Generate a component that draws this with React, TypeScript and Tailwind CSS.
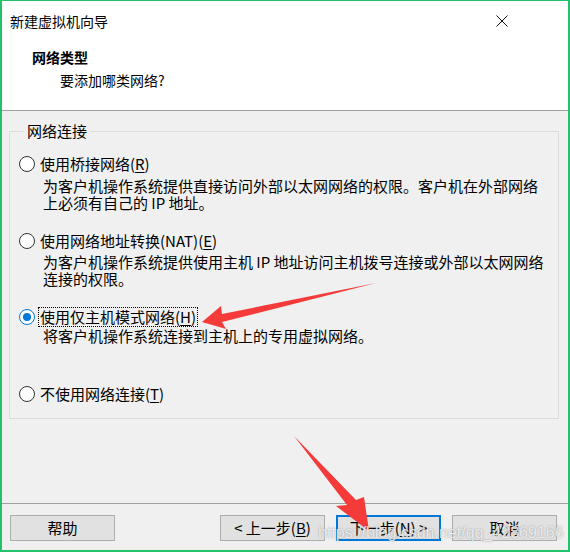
import type { ReactNode } from "react";

const FONT = '"Noto Sans CJK SC", "Noto Sans", sans-serif';

function Radio({ checked }: { checked?: boolean }) {
  return (
    <span
      className={`flex h-[16px] w-[16px] shrink-0 items-center justify-center rounded-full border-[1.5px] bg-white ${
        checked ? "border-[#0078d7]" : "border-[#333333]"
      }`}>
      {checked && <span className="h-[8px] w-[8px] rounded-full bg-[#0078d7]" />}
    </span>
  );
}

function Option({
  label,
  checked,
  focused,
}: {
  label: ReactNode;
  checked?: boolean;
  focused?: boolean;
}) {
  return (
    <div className="flex h-[20px] items-center">
      <Radio checked={checked} />
      <span
        className={`ml-[3px] border px-[1px] leading-[18px] ${
          focused ? "border-dotted border-black" : "border-transparent"
        }`}>
        {label}
      </span>
    </div>
  );
}

function Desc({ lines, className = "" }: { lines: string[]; className?: string }) {
  return (
    <div className={`pl-[24px] leading-[17px] whitespace-nowrap ${className}`}>
      {lines.map((l) => (
        <div key={l}>{l}</div>
      ))}
    </div>
  );
}

function Key({ k }: { k: string }) {
  return <span className="underline underline-offset-2">{k}</span>;
}

function Button({ children, primary }: { children: ReactNode; primary?: boolean }) {
  return (
    <div
      className={`flex h-[26px] w-[105px] items-center justify-center bg-[#e1e1e1] text-[15px] ${
        primary ? "border-2 border-[#0078d7]" : "border border-[#adadad]"
      }`}>
      {children}
    </div>
  );
}

export default function App() {
  return (
    <div
      className="relative flex h-[552px] w-[570px] flex-col overflow-hidden border-x-2 border-t border-b-2 border-[#22c16b] bg-[#f0f0f0] text-black"
      style={{ fontFamily: FONT }}>
      {/* header */}
      <div className="h-[110px] border-b border-[#a0a0a0] bg-white">
        <div className="flex h-[39px] items-center justify-between pl-[8px] pr-[60px]">
          <span className="text-[14px] leading-[20px]">新建虚拟机向导</span>
          <svg width="12" height="12" viewBox="0 0 12 12">
            <path d="M0.5 0.5 L11.5 11.5 M11.5 0.5 L0.5 11.5" stroke="#111" strokeWidth="1" />
          </svg>
        </div>
        <div className="mt-[7px] pl-[30px] text-[14px] leading-[20px] font-bold">网络类型</div>
        <div className="mt-[3px] pl-[58px] text-[14px] leading-[20px]">要添加哪类网络?</div>
      </div>

      {/* body */}
      <div className="flex flex-1 flex-col text-[15px]">
        <fieldset className="mt-[10px] ml-[7px] w-[550px] border border-[#dcdcdc] pt-[13px] pb-[14px] pl-[9px]">
          <legend className="ml-[5px] px-[3px] leading-[20px]">网络连接</legend>
          <Option label={<>使用桥接网络(<Key k="R" />)</>} />
          <Desc
            className="mt-[3px]"
            lines={[
              "为客户机操作系统提供直接访问外部以太网网络的权限。客户机在外部网络",
              "上必须有自己的 IP 地址。",
            ]}
          />
          <div className="mt-[20px]">
            <Option label={<>使用网络地址转换(NAT)(<Key k="E" />)</>} />
          </div>
          <Desc
            className="mt-[2px]"
            lines={[
              "为客户机操作系统提供使用主机 IP 地址访问主机拨号连接或外部以太网网络",
              "连接的权限。",
            ]}
          />
          <div className="mt-[20px]">
            <Option checked focused label={<>使用仅主机模式网络(<Key k="H" />)</>} />
          </div>
          <Desc lines={["将客户机操作系统连接到主机上的专用虚拟网络。"]} />
          <div className="mt-[40px]">
            <Option label={<>不使用网络连接(<Key k="T" />)</>} />
          </div>
        </fieldset>

        <div className="mt-auto border-t border-[#a0a0a0] pt-[11px] pb-[9px]">
          <div className="flex items-center pr-[11px] pl-[8px]">
            <Button>帮助</Button>
            <div className="ml-auto flex gap-[11px]">
              <Button>
                &lt; 上一步(<Key k="B" />)
              </Button>
              <Button primary>
                下一步(<Key k="N" />) &gt;
              </Button>
              <Button>取消</Button>
            </div>
          </div>
        </div>
      </div>

      {/* annotation arrows */}
      <svg
        className="pointer-events-none absolute top-[-1px] left-[-2px]"
        width="570"
        height="552"
        viewBox="0 0 570 552">
        <polygon
          points="376,283 222,314 221,306 202,322 226,329 222,322"
          fill="#f53a3a"
        />
        <polygon
          points="294,436 356,500 364,497 369,531 336,506 347,505"
          fill="#f53a3a"
        />
      </svg>

      <span
        className="pointer-events-none absolute top-[522px] left-[316px] text-[16px] leading-[20px] whitespace-nowrap text-white/80 [text-shadow:0_0_1.5px_rgba(90,90,90,0.7)]"
        style={{ fontFamily: '"Liberation Sans", Arial, sans-serif' }}>
        https://blog.csdn.net/qq_42869166
      </span>
    </div>
  );
}
